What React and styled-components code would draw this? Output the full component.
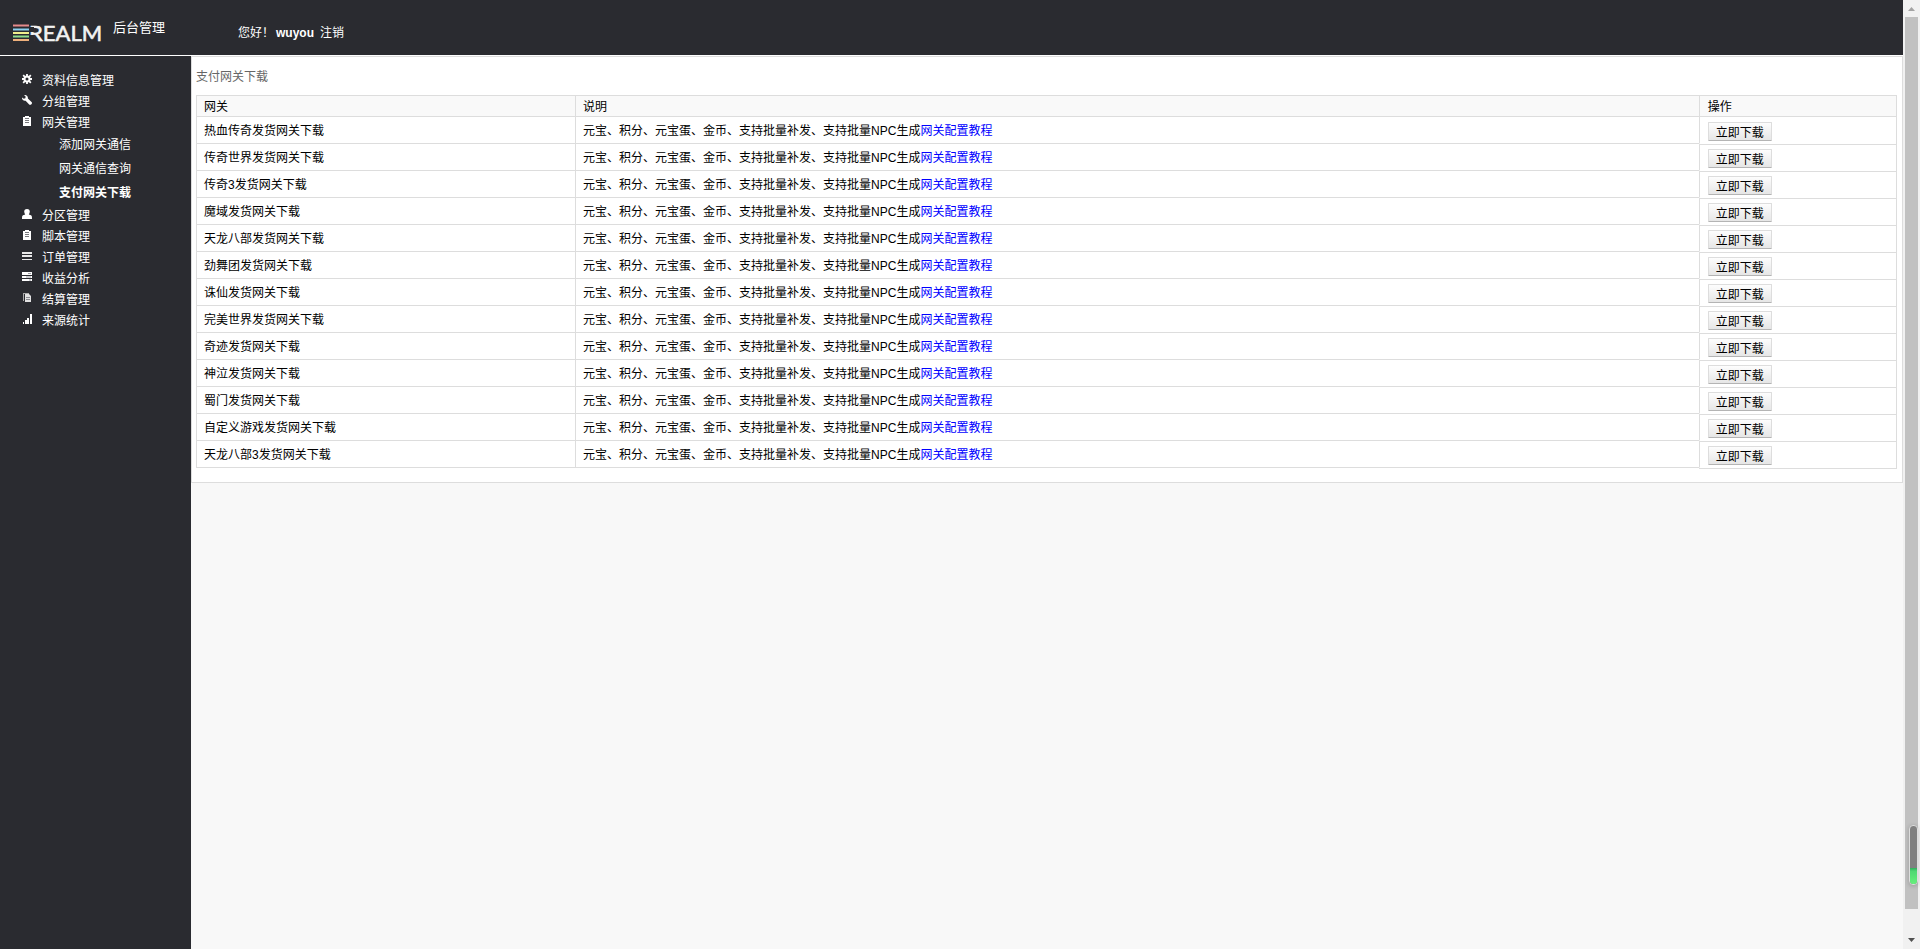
import React from 'react'
import styled, { createGlobalStyle } from 'styled-components'

const menu = [
  { label: '资料信息管理', icon: 'cog' },
  { label: '分组管理', icon: 'wrench' },
  {
    label: '网关管理',
    icon: 'clipboard',
    children: ['添加网关通信', '网关通信查询', '支付网关下载'],
  },
  { label: '分区管理', icon: 'user' },
  { label: '脚本管理', icon: 'clipboard' },
  { label: '订单管理', icon: 'list' },
  { label: '收益分析', icon: 'tasks' },
  { label: '结算管理', icon: 'copy' },
  { label: '来源统计', icon: 'signal' },
]

const gateways = [
  '热血传奇发货网关下载',
  '传奇世界发货网关下载',
  '传奇3发货网关下载',
  '魔域发货网关下载',
  '天龙八部发货网关下载',
  '劲舞团发货网关下载',
  '诛仙发货网关下载',
  '完美世界发货网关下载',
  '奇迹发货网关下载',
  '神泣发货网关下载',
  '蜀门发货网关下载',
  '自定义游戏发货网关下载',
  '天龙八部3发货网关下载',
]

const current = '支付网关下载'

const icons = {
  cog: (
    <>
      <circle cx="5" cy="5" r="2.5" fill="none" stroke="#fff" strokeWidth="2" />
      <path d="M5 0v2M5 8v2M0 5h2M8 5h2M1.2 1.2l1.6 1.6M7.2 7.2l1.6 1.6M8.8 1.2L7.2 2.8M2.8 7.2L1.2 8.8" stroke="#fff" strokeWidth="1.8" />
    </>
  ),
  wrench: (
    <path
      d="M2 0C4 -0.3 6.2 1 5.9 3.4L9.8 7.2C10.5 8.8 9 10.4 7.4 9.7L3.6 5.7C1.8 6.3 -0.2 4.8 0 2.4L1.8 3.8L3.4 3.2L3.6 1.6Z"
      fill="#fff"
    />
  ),
  clipboard: (
    <>
      <path d="M1 1h2V0h4v1h2v9H1z" fill="#fff" />
      <path d="M3 2.5h4M3 4.5h4M3 6.5h4" stroke="#77787c" />
    </>
  ),
  user: (
    <path
      d="M5 0C7 0 7.9 1.2 7.8 2.8C7.7 3.9 7.3 4.8 6.8 5.4L9 6.2C9.8 6.6 10 7.4 10 10H0C0 7.4 0.2 6.6 1 6.2L3.2 5.4C2.7 4.8 2.3 3.9 2.2 2.8C2.1 1.2 3 0 5 0Z"
      fill="#fff"
    />
  ),
  list: <path d="M0 1h10v2H0zM0 4h10v2H0zM0 8h10v1H0z" fill="#e8e8e8" />,
  tasks: (
    <>
      <path d="M0 0h10v3H0zM0 4h10v2H0zM0 7h10v2H0z" fill="#fff" />
      <path d="M6 1.5h3M4 5h5M7 8h2" stroke="#9a9ba2" />
    </>
  ),
  copy: (
    <>
      <path d="M1 0h6v1H2v7H1z" fill="#aaa" />
      <path d="M3 1h4l2 2v6H3z" fill="#e2e2e2" />
      <path d="M4 4.5h4M4 6.5h4" stroke="#8a8b90" />
    </>
  ),
  signal: <path d="M1 8h1v2H1zM3 6h2v4H3zM5 4h2v6H5zM8 0h2v10H8z" fill="#fff" />,
}

const App = () => {
  return (
    <Page>
      <GlobalStyle />
      <Screen>
        <Header>
          <Brand href="#">
            <Logo />
            <BrandTitle>后台管理</BrandTitle>
          </Brand>
          <Greeting>
            您好！<strong>wuyou</strong>
            <a href="#">注销</a>
          </Greeting>
        </Header>
        <Body>
          <Sidebar>
            <Menu>
              {menu.map((item) => (
                <li key={item.label}>
                  <MenuLink href="#">
                    <Icon viewBox="0 0 10 10">{icons[item.icon]}</Icon>
                    {item.label}
                  </MenuLink>
                  {item.children && (
                    <ul>
                      {item.children.map((child) => (
                        <li key={child}>
                          <SubLink href="#" $active={child === current}>
                            {child}
                          </SubLink>
                        </li>
                      ))}
                    </ul>
                  )}
                </li>
              ))}
            </Menu>
          </Sidebar>
          <Content>
            <Panel>
              <PanelTitle>{current}</PanelTitle>
              <Table>
                <colgroup>
                  <NameCol />
                  <col />
                  <ActionCol />
                </colgroup>
                <thead>
                  <tr>
                    <th>网关</th>
                    <th>说明</th>
                    <th>操作</th>
                  </tr>
                </thead>
                <tbody>
                  {gateways.map((name) => (
                    <tr key={name}>
                      <td>{name}</td>
                      <td>
                        元宝、积分、元宝蛋、金币、支持批量补发、支持批量NPC生成
                        <a href="#">网关配置教程</a>
                      </td>
                      <ActionCell>
                        <Button type="button">立即下载</Button>
                      </ActionCell>
                    </tr>
                  ))}
                </tbody>
              </Table>
            </Panel>
          </Content>
        </Body>
      </Screen>
      <Scrollbar>
        <Arrow viewBox="0 0 17 17">
          <path d="M5 11h7L8.5 7z" fill="#a3a3a3" />
        </Arrow>
        <Thumb />
        <Arrow viewBox="0 0 17 17">
          <path d="M5 6h7L8.5 10z" fill="#505050" />
        </Arrow>
        <Gauge>
          <GaugeLevel />
        </Gauge>
      </Scrollbar>
    </Page>
  )
}

const Logo = () => (
  <LogoSvg viewBox="0 -8 92 34">
    <path d="M0 1.5h16" stroke="#e58a8a" strokeWidth="2" />
    <path d="M0 5.5h16" stroke="#8ad0ee" strokeWidth="2" />
    <path d="M0 9h16" stroke="#f0ee8c" strokeWidth="2" />
    <path d="M0 12.5h16" stroke="#8fdc8c" strokeWidth="2" />
    <path d="M0 16h16" stroke="#eeb07c" strokeWidth="2" />
    <text x="16" y="17" fontSize="22" fill="#f2f2f2" stroke="#f2f2f2" strokeWidth="0.6" fontFamily="Lato, sans-serif">
      REALM
    </text>
    {/* opens the stem of the R */}
    <path d="M17 3h4v5h-4zM17 11h4v8h-4z" fill="#2a2b30" />
  </LogoSvg>
)

const GlobalStyle = createGlobalStyle`
  * {
    box-sizing: border-box;
  }
  body {
    margin: 0;
    background: #f8f8f8;
    color: #000;
    font-family: "Liberation Sans", "Noto Sans CJK SC", sans-serif;
    font-size: 12px;
    line-height: 18px;
  }
  ul {
    margin: 0;
    padding: 0;
    list-style: none;
  }
  a {
    text-decoration: none;
  }
`
const Page = styled.div`
  display: flex;
  min-height: 100vh;
`
const Screen = styled.div`
  flex: 1;
  display: flex;
  flex-direction: column;
`
const Header = styled.header`
  display: flex;
  height: 56px;
  background: #2a2b30;
  border-bottom: 1px solid #fff;
  color: #fff;
`
const Brand = styled.a`
  display: flex;
  width: 238px;
  padding-left: 13px;
  color: #fff;
`
const LogoSvg = styled.svg`
  width: 92px;
  height: 34px;
  margin-top: 16px;
`
const BrandTitle = styled.span`
  margin: 18px 0 0 8px;
  font-size: 13px;
  line-height: 20px;
`
const Greeting = styled.div`
  padding-top: 24px;
  strong {
    margin: 0 6px 0 2px;
  }
  a {
    color: #fff;
  }
`
const Body = styled.div`
  flex: 1;
  display: flex;
`
const Sidebar = styled.nav`
  width: 191px;
  padding-top: 14px;
  background: #2a2b30;
`
const Menu = styled.ul`
  display: flex;
  flex-direction: column;
`
const MenuLink = styled.a`
  display: flex;
  gap: 10px;
  height: 21px;
  padding-left: 22px;
  color: #fff;
  line-height: 22px;
`
const Icon = styled.svg`
  width: 10px;
  height: 10px;
  margin-top: 4px;
`
const SubLink = styled.a`
  display: block;
  height: 24px;
  padding-left: 59px;
  color: #fff;
  font-weight: ${(props) => (props.$active ? 'bold' : 'normal')};
  line-height: 24px;
`
const Content = styled.main`
  flex: 1;
`
const Panel = styled.section`
  padding: 11px 5px 14px 4px;
  background: #fff;
  border: 1px solid #ddd;
`
const PanelTitle = styled.h1`
  margin: 0 0 9px;
  color: #666;
  font-size: 12px;
  font-weight: normal;
  line-height: 18px;
`
const NameCol = styled.col`
  width: 22.3%;
`
const ActionCol = styled.col`
  width: 11.6%;
`
const Table = styled.table`
  width: 100%;
  table-layout: fixed;
  border-collapse: separate;
  border-spacing: 0;
  border-top: 1px solid #ddd;
  border-right: 1px solid #ddd;
  th,
  td {
    padding: 2px 7px 0;
    border-left: 1px solid #ddd;
    border-bottom: 1px solid #ddd;
    text-align: left;
  }
  th {
    height: 21px;
    background: #f9f9f9;
    font-weight: normal;
  }
  th:last-child {
    padding-left: 8px;
  }
  td {
    height: 27px;
  }
  td a {
    color: #00f;
  }
`
/* the rule under the buttons runs one pixel lower than the rest of the row */
const ActionCell = styled.td`
  && {
    padding-top: 3px;
    padding-left: 8px;
    border-bottom-color: transparent;
    box-shadow: 0 1px 0 #ddd, 1px 1px 0 #ddd;
  }
`
const Button = styled.button`
  display: block;
  width: 64px;
  height: 19px;
  padding: 1px 0 0;
  background: linear-gradient(#fdfdfd, #e6e6e6);
  border: 1px solid #ddd;
  border-bottom-color: #b4b4b4;
  border-radius: 1px;
  font: inherit;
  line-height: 18px;
`
const Scrollbar = styled.div`
  position: relative;
  display: flex;
  flex-direction: column;
  width: 17px;
  background: #f1f1f1;
`
const Arrow = styled.svg`
  width: 17px;
  height: 17px;
`
const Thumb = styled.div`
  flex: 1;
  margin: 0 2px 23px;
  background: #c1c1c1;
`
const Gauge = styled.div`
  position: absolute;
  right: 2px;
  bottom: 64px;
  display: flex;
  align-items: flex-end;
  width: 9px;
  height: 60px;
  background: #808080;
  border: 1px solid #ddd;
  border-radius: 4px;
  box-shadow: 0 1px 4px rgba(0, 0, 0, 0.2);
  overflow: hidden;
`
const GaugeLevel = styled.div`
  width: 100%;
  height: 16px;
  background: linear-gradient(#2fae5c, #4fd873 20%, #66f07c);
`
export default App
